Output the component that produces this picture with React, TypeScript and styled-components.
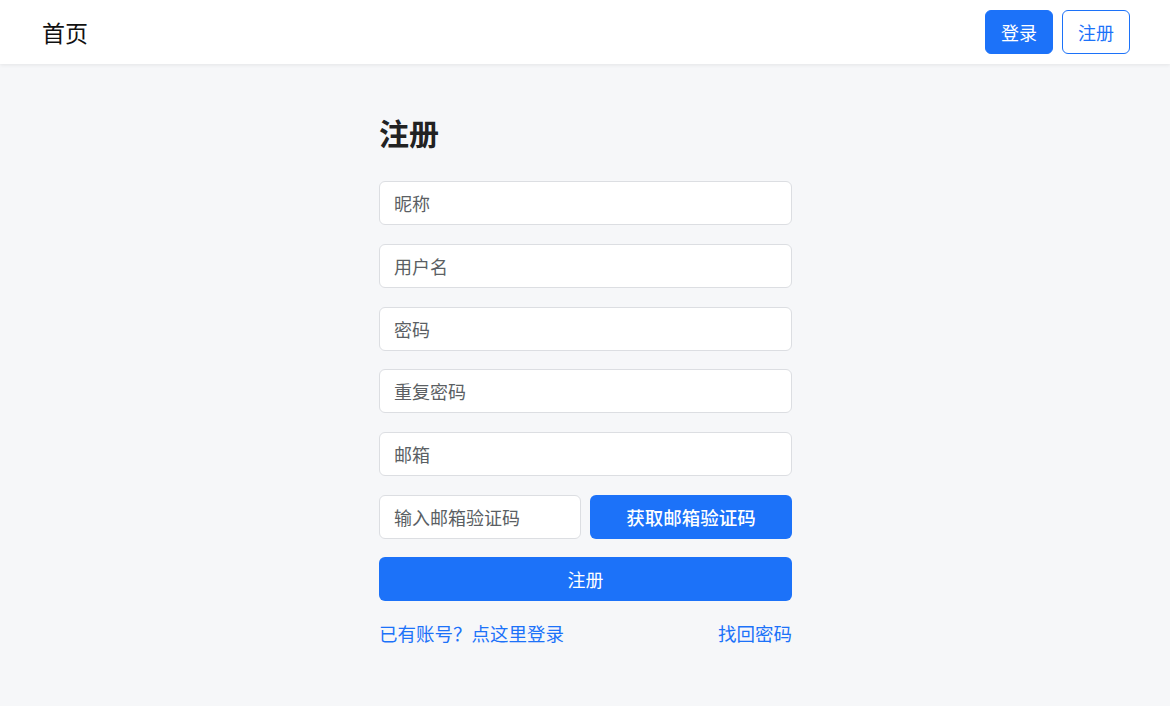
import React from "react";
import styled, { createGlobalStyle } from "styled-components";

const GlobalStyle = createGlobalStyle`
  html, body {
    margin: 0;
    padding: 0;
    background: #f6f7f9;
    font-family: "Noto Sans CJK SC", "Noto Sans", sans-serif;
    color: #212529;
  }
  * {
    box-sizing: border-box;
  }
`;

const Header = styled.header`
  height: 64px;
  background: #ffffff;
  display: flex;
  align-items: center;
  justify-content: space-between;
  padding: 0 40px 1px 42px;
  box-shadow: 0 1px 4px rgba(0, 0, 0, 0.08);
`;

const Brand = styled.div`
  font-size: 23px;
  color: #111;
`;

const Nav = styled.div`
  display: flex;
  gap: 9px;
`;

const NavButton = styled.button<{ $outline?: boolean }>`
  height: 44px;
  width: 68px;
  border-radius: 6px;
  font-family: inherit;
  font-size: 18px;
  font-weight: 400;
  border: 1px solid #1c72f9;
  background: ${(p) => (p.$outline ? "#ffffff" : "#1c72f9")};
  color: ${(p) => (p.$outline ? "#1c72f9" : "#ffffff")};
  padding: 0;
`;

const Main = styled.main`
  display: flex;
  justify-content: center;
  padding-top: 50px;
`;

const Form = styled.div`
  width: 413px;
  margin-left: 1px;
  display: flex;
  flex-direction: column;
`;

const Title = styled.h1`
  margin: 0 0 31px;
  font-size: 30px;
  line-height: 36px;
  font-weight: 700;
  color: #222;
`;

const Fields = styled.div`
  display: flex;
  flex-direction: column;
  gap: 18.8px;
`;

const Input = styled.input`
  height: 44px;
  width: 100%;
  border: 1px solid #dcdee2;
  border-radius: 6px;
  background: #fff;
  padding: 0 14px;
  font-family: inherit;
  font-size: 18px;
  color: #212529;
  outline: none;

  &::placeholder {
    color: #5b5f64;
  }
`;

const CodeRow = styled.div`
  display: grid;
  grid-template-columns: 1fr 1fr;
  gap: 9px;
`;

const PrimaryButton = styled.button<{ $strong?: boolean }>`
  height: 44px;
  width: 100%;
  border: none;
  border-radius: 6px;
  background: #1c72f9;
  color: #fff;
  font-family: inherit;
  font-size: ${(p) => (p.$strong ? "18.5px" : "18px")};
  font-weight: ${(p) => (p.$strong ? 500 : 400)};
  padding: 0;
`;

const SubmitButton = styled(PrimaryButton)`
  margin-top: 18px;
`;

const Links = styled.div`
  margin-top: 19px;
  display: flex;
  justify-content: space-between;
  font-size: 18.5px;
  line-height: 27px;
`;

const Link = styled.a`
  color: #1c72f9;
  text-decoration: none;
  cursor: pointer;
`;

export default function App() {
  return (
    <>
      <GlobalStyle />
      <Header>
        <Brand>首页</Brand>
        <Nav>
          <NavButton>登录</NavButton>
          <NavButton $outline>注册</NavButton>
        </Nav>
      </Header>
      <Main>
        <Form>
          <Title>注册</Title>
          <Fields>
            <Input placeholder="昵称" />
            <Input placeholder="用户名" />
            <Input placeholder="密码" type="password" />
            <Input placeholder="重复密码" type="password" />
            <Input placeholder="邮箱" />
            <CodeRow>
              <Input placeholder="输入邮箱验证码" />
              <PrimaryButton $strong>获取邮箱验证码</PrimaryButton>
            </CodeRow>
          </Fields>
          <SubmitButton>注册</SubmitButton>
          <Links>
            <Link>已有账号？点这里登录</Link>
            <Link>找回密码</Link>
          </Links>
        </Form>
      </Main>
    </>
  );
}
